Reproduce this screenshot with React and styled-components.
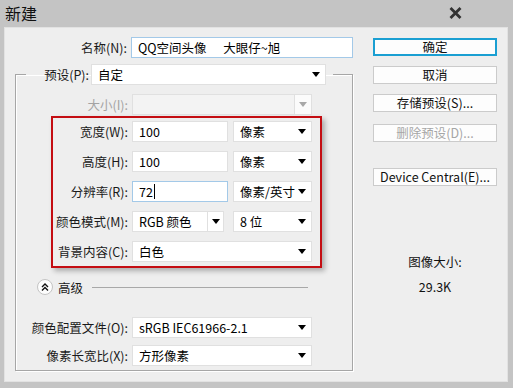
import React from "react";
import styled, { createGlobalStyle } from "styled-components";

const GlobalStyle = createGlobalStyle`
  html, body {
    margin: 0;
    padding: 0;
    background: #c4c4c4;
  }
  * {
    box-sizing: border-box;
  }
`;

const FONT = `"Noto Sans CJK SC", "Noto Sans", sans-serif`;

const Window = styled.div`
  width: 513px;
  height: 388px;
  background: #c4c4c4;
  display: flex;
  flex-direction: column;
  font-family: ${FONT};
  font-size: 12.5px;
  color: #1a1a1a;
  overflow: hidden;
`;

const TitleBar = styled.div`
  height: 27px;
  flex: none;
  display: flex;
  align-items: center;
  justify-content: space-between;
  padding: 0 51px 2px 5px;
  font-size: 16px;
  color: #111;
`;

const Body = styled.div`
  flex: 1;
  margin: 0 5px 6px 4px;
  background: #eeeeee;
  border: 1px solid #e2e2e2;
  display: flex;
  padding: 9px 0 0 10px;
`;

const LeftColumn = styled.div`
  width: 338px;
  display: flex;
  flex-direction: column;
`;

const RightColumn = styled.div`
  width: 124px;
  margin-left: 20px;
  padding-top: 1px;
  display: flex;
  flex-direction: column;
`;

const Row = styled.div`
  display: flex;
  align-items: center;
  gap: 4px;
  height: 21px;
  margin-top: ${(p) => p.$mt || 0}px;
`;

const Label = styled.div`
  width: ${(p) => p.$w}px;
  text-align: right;
  white-space: nowrap;
  line-height: 21px;
  color: ${(p) => (p.$disabled ? "#a3a3a3" : "#1a1a1a")};
`;

const Box = styled.div`
  width: ${(p) => p.$w}px;
  height: 21px;
  flex: none;
  background: ${(p) => (p.$disabled ? "#f3f3f3" : "#ffffff")};
  border: 1px solid ${(p) => (p.$focus ? "#a3c9e8" : "#e0e0e0")};
  display: flex;
  align-items: center;
  padding-left: 6px;
  line-height: 19px;
  white-space: nowrap;
  color: #000;
  margin-left: ${(p) => p.$ml || 0}px;
`;

const Arrow = styled.span`
  margin-left: auto;
  margin-right: 5px;
  flex: none;
  width: 0;
  height: 0;
  border-left: 4px solid transparent;
  border-right: 4px solid transparent;
  border-top: 5px solid ${(p) => (p.$disabled ? "#a8a8a8" : "#000")};
`;

const ArrowCell = styled.span`
  margin-left: auto;
  width: ${(p) => p.$w || 16}px;
  height: 100%;
  border-left: 1px solid #e0e0e0;
  background: ${(p) => (p.$disabled ? "#fbfbfb" : "#fff")};
  display: flex;
  align-items: center;
  justify-content: center;
  &::after {
    content: "";
    border-left: 4px solid transparent;
    border-right: 4px solid transparent;
    border-top: 5px solid ${(p) => (p.$disabled ? "#a8a8a8" : "#000")};
  }
`;

const Caret = styled.span`
  display: inline-block;
  width: 1px;
  height: 15px;
  background: #000;
  margin-left: 1px;
`;

const Group = styled.fieldset`
  margin: 6px 0 0 0;
  padding: 9px 0 4px 0;
  width: 338px;
  min-inline-size: 0;
  border: 1px solid #a6a6a6;
  box-shadow: inset 1px 1px 0 #ffffff, 1px 1px 0 #ffffff;
`;

const Legend = styled.legend`
  margin-left: 10px;
  padding: 0 7px 0 0;
  display: flex;
  align-items: center;
  gap: 2px;
  height: 21px;
`;

const Highlight = styled.div`
  margin: 1px 0 0 35px;
  width: 271px;
  border: 2px solid #c40d12;
  padding: 3px 0 4px 0;
  box-shadow: 3px 3px 5px rgba(0, 0, 0, 0.28);
  display: flex;
  flex-direction: column;
  gap: 9px;
`;

const Advanced = styled.div`
  display: flex;
  align-items: center;
  height: 16px;
  margin: 11px 0 0 21px;
  gap: 5px;
`;

const ToggleCircle = styled.span`
  width: 16px;
  height: 16px;
  border-radius: 50%;
  background: #fdfdfd;
  border: 1px solid #c4c4c4;
  display: flex;
  align-items: center;
  justify-content: center;
`;

const Rule = styled.span`
  flex: none;
  width: 216px;
  height: 1px;
  margin-left: 4px;
  background: #a8a8a8;
`;

const Button = styled.div`
  height: 18px;
  margin-top: ${(p) => p.$mt || 0}px;
  background: #fdfdfd;
  border: ${(p) => (p.$default ? "2px solid #1a9fd2" : "1px solid #cbcbcb")};
  display: flex;
  align-items: center;
  justify-content: center;
  line-height: 16px;
  white-space: nowrap;
  color: ${(p) => (p.$disabled ? "#a6a6a6" : "#111")};
`;

const SizeInfo = styled.div`
  margin-top: 68px;
  text-align: center;
  line-height: 16px;
  color: #111;
`;

const SizeValue = styled.div`
  margin-top: 9px;
  text-align: center;
  line-height: 16px;
  color: #111;
`;

const CloseIcon = () => (
  <svg width="13" height="12" viewBox="0 0 13 12">
    <path d="M1.5 1 L11.5 11 M11.5 1 L1.5 11" stroke="#333" strokeWidth="2.8" />
  </svg>
);

const ChevronsUp = () => (
  <svg width="8" height="8" viewBox="0 0 8 8">
    <path d="M1 4 L4 1 L7 4 M1 7.5 L4 4.5 L7 7.5" stroke="#111" strokeWidth="1.4" fill="none" />
  </svg>
);

const Select = ({ w, children, ml }) => (
  <Box $w={w} $ml={ml}>
    {children}
    <Arrow />
  </Box>
);

export default function App() {
  return (
    <>
      <GlobalStyle />
      <Window>
        <TitleBar>
          <span>新建</span>
          <CloseIcon />
        </TitleBar>
        <Body>
          <LeftColumn>
            <Row>
              <Label $w={113}>名称(N):</Label>
              <Box $w={222} $focus>
                QQ空间头像&nbsp;&nbsp;&nbsp;&nbsp;&nbsp;&nbsp;大眼仔~旭
              </Box>
            </Row>

            <Group>
              <Legend>
                <Label $w={63}>预设(P):</Label>
                <Select w={235}>自定</Select>
              </Legend>

              <Row>
                <Label $w={112} $disabled>
                  大小(I):
                </Label>
                <Box $w={180} $disabled>
                  <ArrowCell $w={17} $disabled />
                </Box>
              </Row>

              <Highlight>
                <Row>
                  <Label $w={75}>宽度(W):</Label>
                  <Box $w={96}>100</Box>
                  <Select w={79} ml={1}>像素</Select>
                </Row>
                <Row>
                  <Label $w={75}>高度(H):</Label>
                  <Box $w={96}>100</Box>
                  <Select w={79} ml={1}>像素</Select>
                </Row>
                <Row>
                  <Label $w={75}>分辨率(R):</Label>
                  <Box $w={96} $focus>
                    72
                    <Caret />
                  </Box>
                  <Select w={79} ml={1}>像素/英寸</Select>
                </Row>
                <Row>
                  <Label $w={75}>颜色模式(M):</Label>
                  <Box $w={92}>
                    RGB 颜色
                    <ArrowCell />
                  </Box>
                  <Select w={79} ml={5}>8 位</Select>
                </Row>
                <Row>
                  <Label $w={75}>背景内容(C):</Label>
                  <Select w={180}>白色</Select>
                </Row>
              </Highlight>

              <Advanced>
                <ToggleCircle>
                  <ChevronsUp />
                </ToggleCircle>
                <span>高级</span>
                <Rule />
              </Advanced>

              <Row $mt={22}>
                <Label $w={112}>颜色配置文件(O):</Label>
                <Select w={180}>sRGB IEC61966-2.1</Select>
              </Row>
              <Row $mt={7}>
                <Label $w={112}>像素长宽比(X):</Label>
                <Select w={180}>方形像素</Select>
              </Row>
            </Group>
          </LeftColumn>

          <RightColumn>
            <Button $default>确定</Button>
            <Button $mt={10}>取消</Button>
            <Button $mt={10}>存储预设(S)...</Button>
            <Button $mt={12} $disabled>
              删除预设(D)...
            </Button>
            <Button $mt={26}>Device Central(E)...</Button>
            <SizeInfo>图像大小:</SizeInfo>
            <SizeValue>29.3K</SizeValue>
          </RightColumn>
        </Body>
      </Window>
    </>
  );
}
